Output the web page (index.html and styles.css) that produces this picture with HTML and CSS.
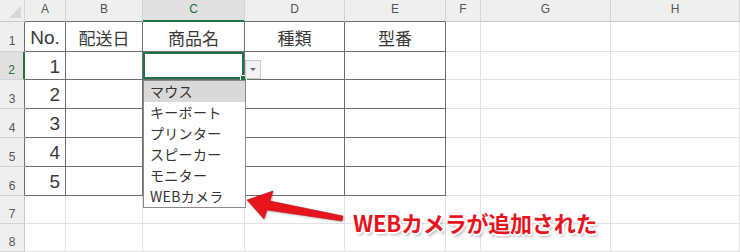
FILE: index.html
```html
<!DOCTYPE html>
<html lang="ja">
<head>
  <meta charset="UTF-8" />
  <title>入力規則のリスト</title>
  <link rel="stylesheet" href="styles.css">
</head>
<body>

  <div class="sheet">
    <!-- column headers -->
    <div class="hd corner"><span class="tri"></span></div>
    <div class="hd tb">A</div>
    <div class="hd tb">B</div>
    <div class="hd tb sel">C</div>
    <div class="hd tb">D</div>
    <div class="hd tb">E</div>
    <div class="hd">F</div>
    <div class="hd">G</div>
    <div class="hd">H</div>

    <!-- row 1 -->
    <div class="rh tb">1</div>
    <div class="c t ctr num-font">No.</div>
    <div class="c t ctr">配送日</div>
    <div class="c t ctr">商品名</div>
    <div class="c t ctr">種類</div>
    <div class="c t ctr">型番</div>
    <div class="c"></div><div class="c"></div><div class="c"></div>

    <!-- row 2 -->
    <div class="rh tb sel">2</div>
    <div class="c t num">1</div>
    <div class="c t"></div>
    <div class="c t active"><span class="handle"></span></div>
    <div class="c t"></div>
    <div class="c t"></div>
    <div class="c"></div><div class="c"></div><div class="c"></div>

    <!-- row 3 -->
    <div class="rh tb">3</div>
    <div class="c t num">2</div>
    <div class="c t"></div><div class="c t"></div><div class="c t"></div><div class="c t"></div>
    <div class="c"></div><div class="c"></div><div class="c"></div>

    <!-- row 4 -->
    <div class="rh tb">4</div>
    <div class="c t num">3</div>
    <div class="c t"></div><div class="c t"></div><div class="c t"></div><div class="c t"></div>
    <div class="c"></div><div class="c"></div><div class="c"></div>

    <!-- row 5 -->
    <div class="rh tb">5</div>
    <div class="c t num">4</div>
    <div class="c t"></div><div class="c t"></div><div class="c t"></div><div class="c t"></div>
    <div class="c"></div><div class="c"></div><div class="c"></div>

    <!-- row 6 -->
    <div class="rh tb">6</div>
    <div class="c t num">5</div>
    <div class="c t"></div><div class="c t"></div><div class="c t"></div><div class="c t"></div>
    <div class="c"></div><div class="c"></div><div class="c"></div>

    <!-- row 7 -->
    <div class="rh">7</div>
    <div class="c"></div><div class="c"></div><div class="c"></div><div class="c"></div>
    <div class="c"></div><div class="c"></div><div class="c"></div><div class="c"></div>

    <!-- row 8 -->
    <div class="rh">8</div>
    <div class="c"></div><div class="c"></div><div class="c"></div><div class="c"></div>
    <div class="c"></div><div class="c"></div><div class="c"></div><div class="c"></div>

    <!-- dropdown button + list -->
    <div class="dd-btn"><span class="dd-tri"></span></div>
    <ul class="dd-list">
      <li class="hover">マウス</li>
      <li>キーボート</li>
      <li>プリンター</li>
      <li>スピーカー</li>
      <li>モニター</li>
      <li>WEBカメラ</li>
    </ul>

    <!-- annotation -->
    <svg class="arrow" width="110" height="40" viewBox="0 0 110 40">
      <polygon points="2,10 28,1 25,11 98,26 97,31 22,20 19,29" fill="#e8141c" stroke="#b80e14" stroke-width="0.6" stroke-linejoin="round"/>
    </svg>
    <div class="note">WEBカメラが追加された</div>
  </div>

</body>
</html>
```

FILE: styles.css
```css
:root {
  --grid: #e2e2e2;
  --line: #6e6e6e;
  --head-bg: #efefef;
  --head-line: #d4d4d4;
  --green: #217346;
  --red: #e8141c;
}

body {
  margin: 0;
  background: #ffffff;
  font-family: "Noto Sans CJK JP", "Noto Sans", sans-serif;
  color: #333;
}

.sheet {
  position: relative;
  width: 740px;
  height: 252px;
  overflow: hidden;
  display: grid;
  grid-template-columns: 25px 41px 77px 102px 100px 101px 35px 130px 129px;
  grid-template-rows: 22px 30px 28px 29px 29px 29px 29px 28px 28px;
}

.sheet > div {
  box-sizing: border-box;
}

/* headers */
.hd {
  background: var(--head-bg);
  border-right: 1px solid var(--head-line);
  border-bottom: 1px solid #c8c8c8;
  font-family: "Liberation Sans", sans-serif;
  font-size: 12px;
  color: #555;
  display: flex;
  align-items: center;
  justify-content: center;
  padding-bottom: 3px;
}

.hd.tb {
  border-bottom-color: var(--line);
}

.hd.sel {
  background: #e0e0e0;
  color: var(--green);
  border-bottom: 2px solid var(--green);
}

.corner {
  position: relative;
}

.corner .tri {
  position: absolute;
  right: 3px;
  bottom: 3px;
  width: 0;
  height: 0;
  border-left: 12px solid transparent;
  border-bottom: 12px solid #d6d6d6;
}

.rh {
  background: var(--head-bg);
  border-right: 1px solid #c8c8c8;
  border-bottom: 1px solid var(--head-line);
  font-family: "Liberation Sans", sans-serif;
  font-size: 12px;
  color: #555;
  display: flex;
  align-items: center;
  justify-content: center;
  padding-top: 9px;
}

.rh.tb {
  border-right-color: var(--line);
}

.rh.sel {
  background: #e0e0e0;
  color: var(--green);
  border-right: 2px solid var(--green);
}

/* cells */
.c {
  border-right: 1px solid var(--grid);
  border-bottom: 1px solid var(--grid);
  display: flex;
  align-items: center;
  font-size: 17px;
  color: #3a3a3a;
  padding-top: 2px;
}

.c.t {
  border-right-color: var(--line);
  border-bottom-color: var(--line);
}

.ctr {
  justify-content: center;
}

.num, .num-font {
  font-family: "Liberation Sans", sans-serif;
  font-size: 19px;
}

.num {
  justify-content: flex-end;
  padding-right: 5px;
}

.active {
  position: relative;
  box-shadow: inset 0 0 0 2px var(--green);
}

.handle {
  position: absolute;
  right: -3px;
  bottom: -3px;
  width: 5px;
  height: 5px;
  background: var(--green);
  border: 1px solid #fff;
}

/* dropdown */
.dd-btn {
  position: absolute;
  left: 245px;
  top: 60px;
  width: 16px;
  height: 19px;
  box-sizing: border-box;
  background: #f3f3f3;
  border: 1px solid #c9c9c9;
  display: flex;
  align-items: center;
  justify-content: center;
}

.dd-tri {
  width: 0;
  height: 0;
  border-left: 3px solid transparent;
  border-right: 3px solid transparent;
  border-top: 3px solid #666;
}

.dd-list {
  position: absolute;
  left: 143px;
  top: 80px;
  width: 103px;
  margin: 0;
  padding: 0;
  list-style: none;
  box-sizing: border-box;
  background: #fff;
  border: 1px solid #8a8a8a;
}

.dd-list li {
  height: 21px;
  line-height: 21px;
  padding-left: 6px;
  font-size: 14px;
  color: #333;
  letter-spacing: 0.3px;
}

.dd-list li.hover {
  background: #d9d9d9;
}

/* annotation */
.arrow {
  position: absolute;
  left: 245px;
  top: 190px;
  filter: drop-shadow(1px 1px 1px rgba(0, 0, 0, 0.25));
}

.note {
  position: absolute;
  left: 353px;
  top: 209px;
  font-size: 22px;
  font-weight: bold;
  line-height: 26px;
  color: var(--red);
  letter-spacing: -0.2px;
  text-shadow:
    -2px 0 0 #fff, 2px 0 0 #fff, 0 -2px 0 #fff, 0 2px 0 #fff,
    -1px -1px 0 #fff, 1px 1px 0 #fff, -1px 1px 0 #fff, 1px -1px 0 #fff,
    2px 3px 3px rgba(0, 0, 0, 0.3);
}
```
